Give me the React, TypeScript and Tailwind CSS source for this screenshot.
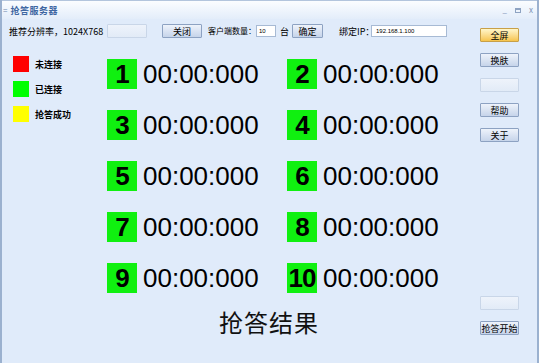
import React from 'react';

const players = [1, 2, 3, 4, 5, 6, 7, 8, 9, 10];

const Btn: React.FC<{ label?: string; kind?: 'normal' | 'off' | 'hot'; w?: string }> = ({ label = '', kind = 'normal', w = 'w-[40px]' }) => {
  const look =
    kind === 'hot'
      ? 'border-[#c8a048] bg-gradient-to-b from-[#fff6c8] to-[#f6c44a]'
      : kind === 'off'
        ? 'border-[#c9d6e8] bg-gradient-to-b from-[#eef3fb] to-[#e2ebf7]'
        : 'border-[#8da2c2] bg-gradient-to-b from-[#eef3fb] to-[#c6d4ea]';
  return (
    <div className={`${w} h-[14px] border rounded-[1px] ${look} flex items-center justify-center text-[9px] leading-none text-black whitespace-nowrap`}>
      {label}
    </div>
  );
};

export default function App() {
  return (
    <div className="w-[539px] h-[363px] flex flex-col bg-[#e0ebfa] border-x-2 border-[#9bb1cf] font-['Noto_Sans_CJK_SC',sans-serif] overflow-hidden">
      {/* title bar */}
      <div className="h-[19px] shrink-0 flex items-center border-t border-[#b3c5dd] bg-gradient-to-b from-[#fbfdff] to-[#e3edfa]">
        <span className="ml-[1px] text-[8px] text-[#6d86ad] leading-none">=</span>
        <span className="ml-[3px] text-[9px] font-bold text-[#3f67a2] leading-none tracking-[0.5px]">抢答服务器</span>
        <div className="ml-auto mr-[4px] flex items-center gap-[8px] text-[8px] text-[#7c93b6] leading-none">
          <span>_</span>
          <span className="w-[6px] h-[5px] border border-[#8ea3c2] border-t-2"></span>
          <span>x</span>
        </div>
      </div>

      <div className="flex flex-1">
        {/* main */}
        <div className="w-[476px] flex flex-col">
          <div className="mt-[5px] h-[14px] pl-[7px] flex items-center text-[9px] leading-none text-black">
            <span className="w-[98px] whitespace-nowrap">推荐分辨率，1024X768</span>
            <Btn kind="off" />
            <div className="ml-[15px]"><Btn label="关闭" /></div>
            <span className="ml-[6px] w-[48px] whitespace-nowrap text-[8px]">客户端数量：</span>
            <div className="w-[20px] h-[12px] bg-white border border-[#a7bad4] text-[6px] flex items-center pl-[2px] font-['Liberation_Sans',sans-serif]">10</div>
            <span className="ml-[4px] w-[12px]">台</span>
            <Btn label="确定" w="w-[31px]" />
            <span className="ml-[16px] w-[32px] whitespace-nowrap">绑定IP：</span>
            <div className="w-[76px] h-[12px] bg-white border border-[#a7bad4] text-[6px] flex items-center pl-[4px] font-['Liberation_Sans',sans-serif]">192.168.1.100</div>
          </div>

          <div className="flex mt-[18px]">
            {/* legend */}
            <div className="w-[105px] pl-[11px] flex flex-col gap-[9px]">
              {[
                ['bg-[#ff0000]', '未连接'],
                ['bg-[#00ff00]', '已连接'],
                ['bg-[#ffff00]', '抢答成功'],
              ].map(([c, t]) => (
                <div key={t} className="flex items-center h-[16px]">
                  <div className={`w-[16px] h-[16px] ${c}`}></div>
                  <span className="ml-[6px] text-[9px] font-bold leading-none">{t}</span>
                </div>
              ))}
            </div>

            {/* grid */}
            <div className="mt-[3px] grid grid-cols-[180px_180px] gap-y-[21px]">
              {players.map((n) => (
                <div key={n} className="flex items-center h-[30px]">
                  <div className="w-[30px] h-[30px] bg-[#10f010] flex items-center justify-center font-['Liberation_Sans',sans-serif] font-bold text-[26px] leading-none text-black tracking-[-1px]">
                    {n}
                  </div>
                  <span className="ml-[6px] font-['Liberation_Sans',sans-serif] text-[26px] leading-none text-black">00:00:000</span>
                </div>
              ))}
            </div>
          </div>

          <div className="mt-[17px] pl-[217px] text-[24px] leading-none text-[#111] tracking-[1px]">抢答结果</div>
        </div>

        {/* right buttons */}
        <div className="flex flex-col pl-[2px] pt-[9px]">
          <div className="flex flex-col gap-[11px]">
            <Btn label="全屏" kind="hot" w="w-[39px]" />
            <Btn label="换肤" w="w-[39px]" />
            <Btn kind="off" w="w-[39px]" />
            <Btn label="帮助" w="w-[39px]" />
            <Btn label="关于" w="w-[39px]" />
          </div>
          <div className="mt-[154px] flex flex-col gap-[11px]">
            <Btn kind="off" w="w-[39px]" />
            <Btn label="抢答开始" w="w-[39px]" />
          </div>
        </div>
      </div>
    </div>
  );
}
